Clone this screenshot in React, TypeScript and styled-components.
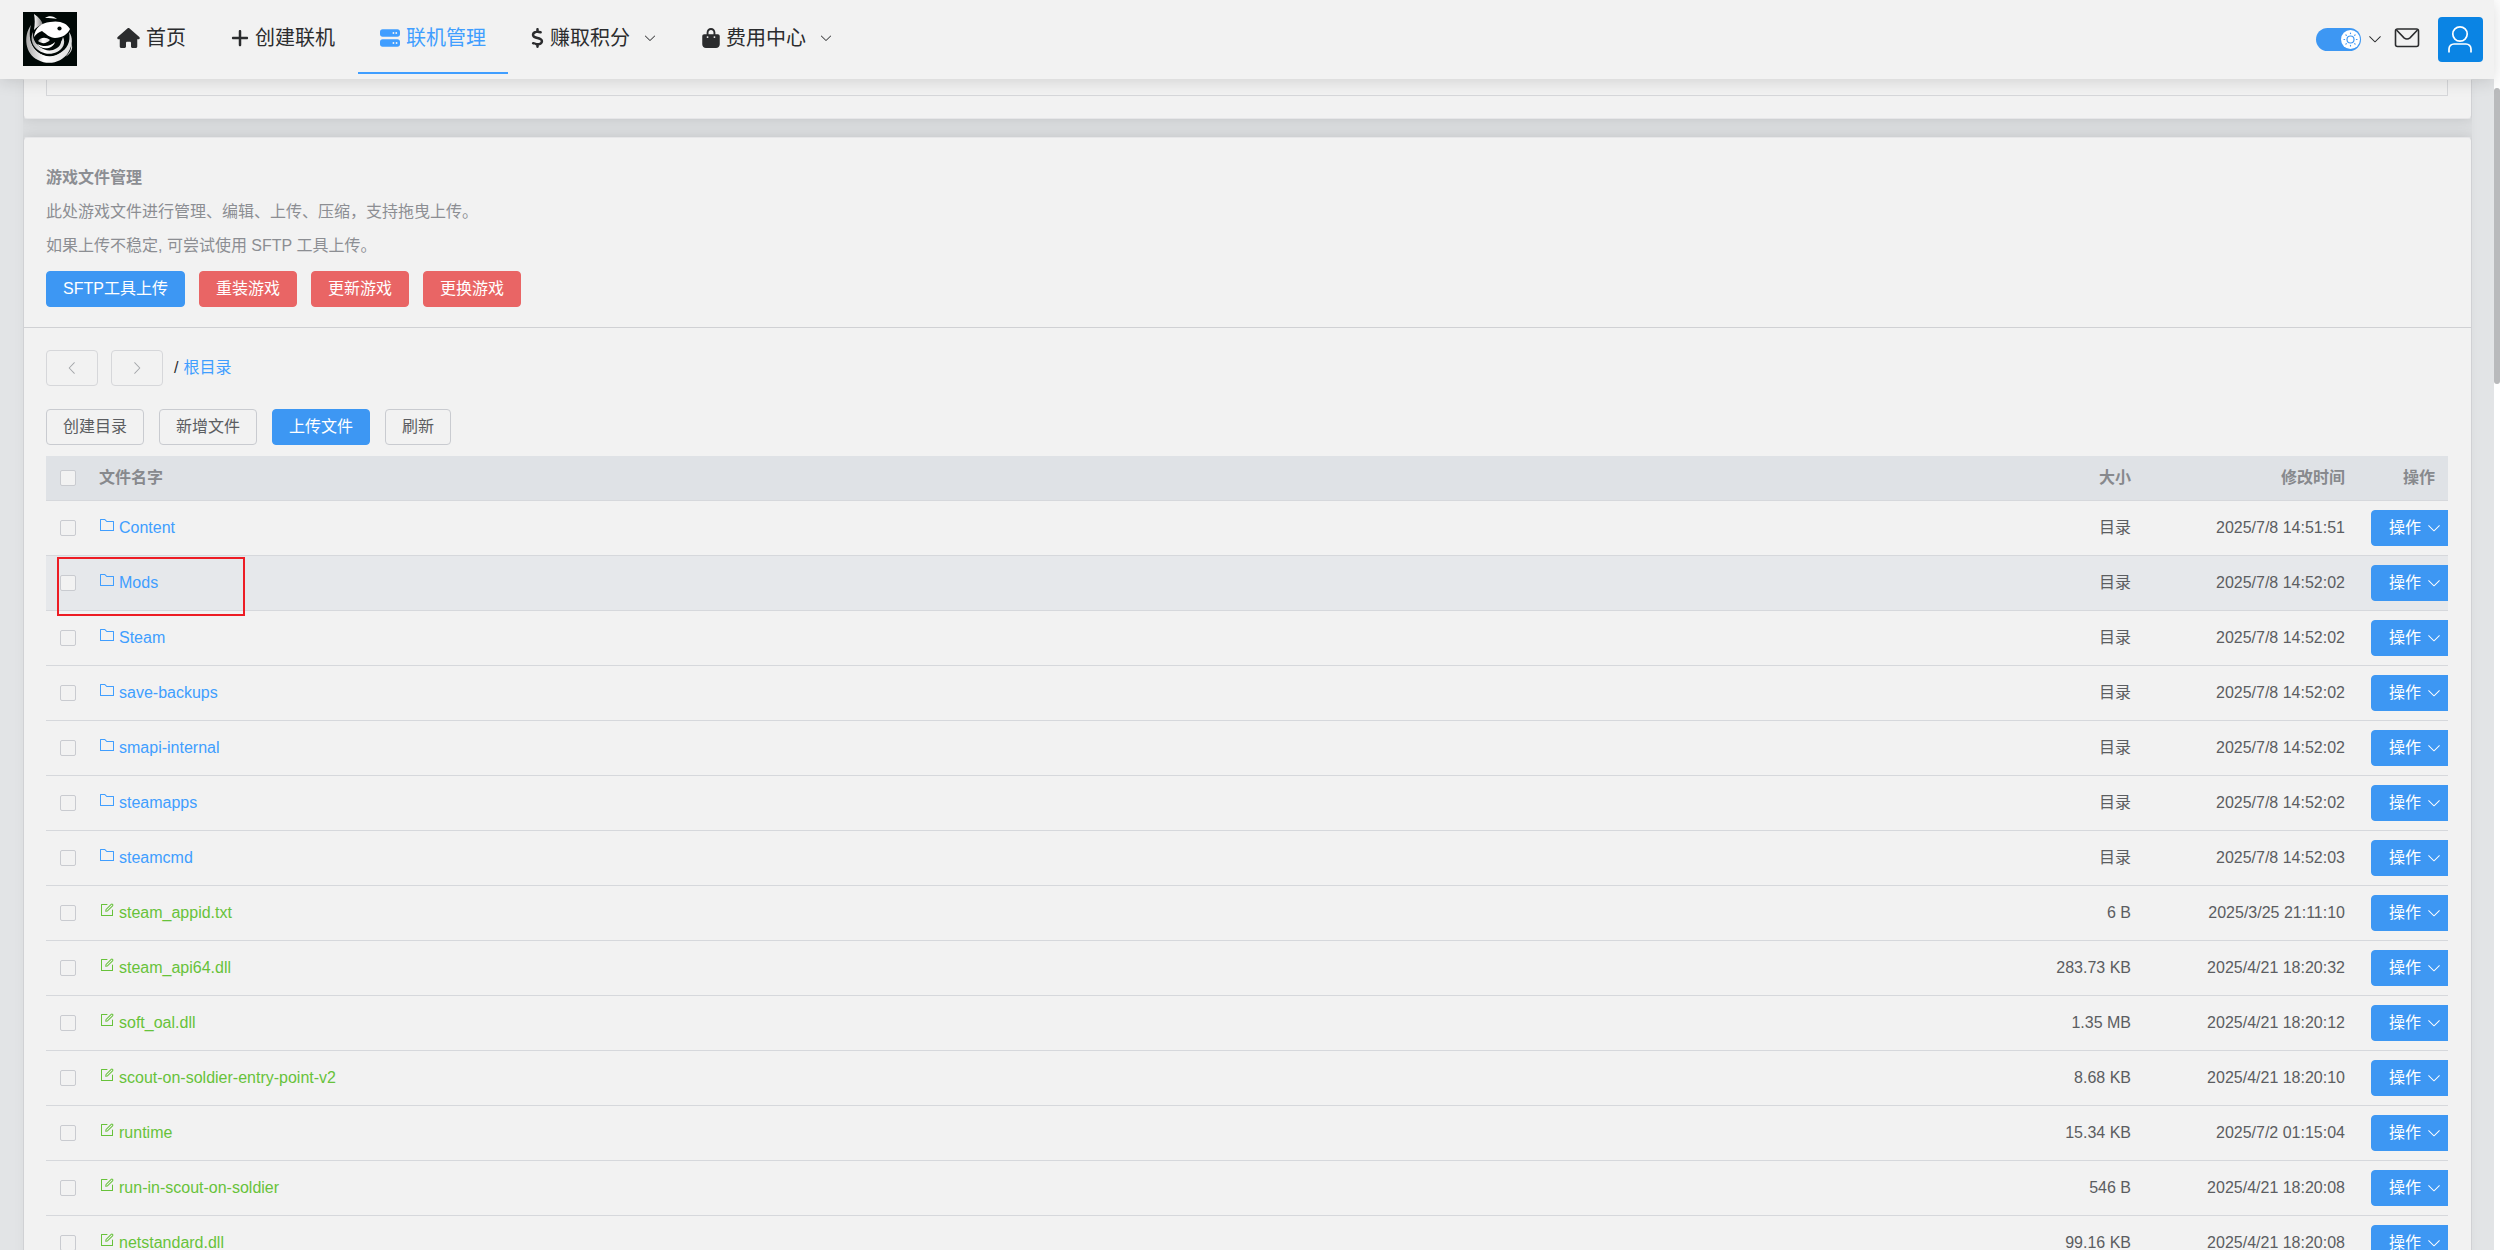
import React from 'react';
import styled, { createGlobalStyle } from 'styled-components';
import { FaHouse, FaPlus, FaServer, FaDollarSign, FaBagShopping } from 'react-icons/fa6';

const GlobalStyle = createGlobalStyle`
  *, *::before, *::after { box-sizing: border-box; }
  body {
    margin: 0;
    background: #ffffff;
    color: #5b5d61;
    font-family: "Liberation Sans", "Noto Sans CJK SC", sans-serif;
    font-size: 16px;
  }
  h2, p, ul { margin: 0; padding: 0; }
  a { color: #409eff; text-decoration: none; }
  button { font: inherit; cursor: pointer; }
  svg { display: block; flex: none; }
`;

const Page = styled.div`
  display: flex;
  height: 100vh;
`;

const Viewport = styled.div`
  flex: 1;
  min-width: 0;
  display: flex;
  flex-direction: column;
  background: #e2e4e6;
`;

const ScrollTrack = styled.div`
  width: 6px;
  padding-top: 88px;
  background: #ffffff;
`;

const ScrollThumb = styled.div`
  height: 296px;
  border-radius: 3px;
  background: #b9babc;
`;

/* ---------- top bar ---------- */

const TopBar = styled.header`
  position: relative;
  z-index: 2;
  flex: none;
  display: flex;
  align-items: center;
  height: 79px;
  padding: 0 11px 1px 23px;
  background: #f2f2f2;
  box-shadow: 0 2px 16px rgba(0, 0, 0, 0.14);
`;

const NavList = styled.ul`
  display: flex;
  flex: 1;
  gap: 1px;
  align-self: flex-start;
  margin-left: 18px;
  list-style: none;
`;

const NavLink = styled.a<{ $active?: boolean }>`
  display: flex;
  align-items: center;
  gap: 6px;
  height: 74px;
  padding: 0 22px;
  border-top: 4px solid transparent;
  border-bottom: 2px solid ${(p) => (p.$active ? '#409eff' : 'transparent')};
  color: ${(p) => (p.$active ? '#409eff' : '#2b2c2e')};
  font-size: 20px;
  line-height: 28px;
  white-space: nowrap;
`;

const NavIcon = styled.span<{ $width: number }>`
  display: flex;
  svg {
    width: ${(p) => p.$width}px;
    height: 20px;
  }
`;

const NavCaret = styled.span`
  margin-left: 7px;
`;

const Tools = styled.div`
  display: flex;
  align-items: center;
`;

const ThemeSwitch = styled.label`
  display: flex;
  position: relative;
  input {
    appearance: none;
    width: 45px;
    height: 23px;
    margin: 0;
    border-radius: 12px;
    background: #3d97f3;
  }
`;

const SwitchKnob = styled.span`
  position: absolute;
  top: 2px;
  right: 1px;
  width: 19px;
  height: 19px;
  border-radius: 50%;
  background: #ffffff;
  color: #3d97f3;
`;

const PlainButton = styled.button<{ $gap: number }>`
  display: flex;
  margin: 0 0 0 ${(p) => p.$gap}px;
  padding: 0;
  border: 0;
  background: none;
  color: #2b2c2e;
`;

const Avatar = styled(PlainButton)`
  border-radius: 4px;
  background: #0a84e4;
  color: #ffffff;
`;

/* ---------- cards ---------- */

const Scroller = styled.main`
  flex: 1;
  min-height: 0;
  overflow-y: auto;
  scrollbar-width: none;
  padding: 0 22px 0 23px;
`;

const Column = styled.div`
  display: flex;
  flex-direction: column;
  gap: 18px;
  overflow: hidden;
  background: #dcdee0;
  box-shadow: 0 0 12px rgba(0, 0, 0, 0.04);
`;

const Card = styled.section<{ $continued?: boolean }>`
  border: 1px solid #d0d1d4;
  border-top-color: ${(p) => (p.$continued ? 'transparent' : '#e6e6e8')};
  border-bottom-color: #e6e6e8;
  border-radius: ${(p) => (p.$continued ? '0 0 4px 4px' : '4px')};
  background: #f2f2f2;
  box-shadow: 0 0 14px rgba(0, 0, 0, 0.12);
`;

const PanelEnd = styled.div`
  height: 16px;
  margin: 0 23px 22px 22px;
  border: 1px solid #d6d7da;
  border-top: 0;
`;

const CardHead = styled.div`
  padding: 23px 23px 20px 22px;
  border-bottom: 1px solid #d0d1d4;
  color: #8c8e93;
  line-height: 34px;
`;

const Title = styled.h2`
  font-size: 16px;
  font-weight: bold;
`;

const CardBody = styled.div`
  padding: 22px 23px 22px 22px;
`;

const ButtonRow = styled.div<{ $gap: number; $top?: number }>`
  display: flex;
  align-items: center;
  gap: ${(p) => p.$gap}px;
  margin-top: ${(p) => p.$top || 0}px;
`;

const tones = {
  primary: { bg: '#3d97f3', edge: '#3d97f3', ink: '#ffffff' },
  danger: { bg: '#e96565', edge: '#e96565', ink: '#ffffff' },
  plain: { bg: '#f2f2f2', edge: '#c9cbd0', ink: '#5b5d61' },
  muted: { bg: '#f2f2f2', edge: '#d6d7da', ink: '#a4a6aa' },
};

const Button = styled.button<{ $tone: keyof typeof tones }>`
  display: flex;
  align-items: center;
  justify-content: center;
  gap: 5px;
  height: 36px;
  padding: 0 16px;
  border: 1px solid ${(p) => tones[p.$tone].edge};
  border-radius: 4px;
  background: ${(p) => tones[p.$tone].bg};
  color: ${(p) => tones[p.$tone].ink};
  line-height: 20px;
  white-space: nowrap;
`;

const StepButton = styled(Button)`
  width: 52px;
  cursor: not-allowed;
`;

const RowButton = styled(Button)`
  padding: 0 17px;
`;

const Crumbs = styled.nav`
  display: flex;
  gap: 5px;
  margin-left: -2px;
  color: #2b2c2e;
  line-height: 20px;
`;

/* ---------- file table ---------- */

const Table = styled.table`
  width: 100%;
  margin-top: 11px;
  table-layout: fixed;
  border-spacing: 0;
  line-height: 24px;
`;

const Col = styled.col<{ $width?: number }>`
  width: ${(p) => (p.$width ? p.$width + 'px' : 'auto')};
`;

const HeadCell = styled.th<{ $right?: boolean }>`
  height: 45px;
  padding: 0 13px;
  border-bottom: 1px solid #d6d8dc;
  background: #dfe2e6;
  color: #87898d;
  font-weight: bold;
  text-align: ${(p) => (p.$right ? 'right' : 'left')};
`;

const Row = styled.tr<{ $hovered?: boolean }>`
  background: ${(p) => (p.$hovered ? '#e6e8eb' : 'transparent')};
`;

const Cell = styled.td<{ $right?: boolean }>`
  position: relative;
  height: 55px;
  padding: 0 13px;
  border-bottom: 1px solid #d6d8dc;
  text-align: ${(p) => (p.$right ? 'right' : 'left')};
  white-space: nowrap;
`;

const ActionCell = styled(Cell)`
  padding-right: 0;
  overflow: hidden;
`;

const Check = styled.input`
  appearance: none;
  display: block;
  width: 16px;
  height: 16px;
  margin: 0 0 0 1px;
  border: 1px solid #c9cbd0;
  border-radius: 2px;
  background: #f2f2f2;
`;

const FileLink = styled.a<{ $file: boolean }>`
  color: ${(p) => (p.$file ? '#67c23a' : '#409eff')};
  svg {
    display: inline;
    margin-right: 4px;
    vertical-align: baseline;
  }
`;

const Marker = styled.span`
  position: absolute;
  z-index: 1;
  top: 1px;
  left: 11px;
  width: 188px;
  height: 59px;
  border: 2px solid #ed1c24;
  pointer-events: none;
`;

/* ---------- drawings ---------- */

const Glyph = ({ d, size = 16, turn = 0 }: { d: string; size?: number; turn?: number }) => (
  <svg width={size} height={size} viewBox="0 0 1024 1024" fill="currentColor" aria-hidden="true">
    <path d={d} transform={`rotate(${turn} 512 512)`} />
  </svg>
);

const ARROW =
  'M831.872 340.864 512 652.672 192.128 340.864a30.592 30.592 0 0 0-42.752 0 29.12 29.12 0 0 0 0 41.6L489.664 714.24a32 32 0 0 0 44.672 0l340.288-331.712a29.12 29.12 0 0 0 0-41.728 30.592 30.592 0 0 0-42.752 0z';
const FOLDER =
  'M128 192v640h768V320H485.76L357.504 192H128zm-32-64h287.872l128.384 128H928a32 32 0 0 1 32 32v576a32 32 0 0 1-32 32H96a32 32 0 0 1-32-32V160a32 32 0 0 1 32-32z';
const EDIT =
  'M832 512a32 32 0 1 1 64 0v352a32 32 0 0 1-32 32H160a32 32 0 0 1-32-32V160a32 32 0 0 1 32-32h352a32 32 0 0 1 0 64H192v640h640V512zM469.952 554.24l52.8-7.552L847.104 222.4a32 32 0 1 0-45.248-45.248L477.44 501.44l-7.488 52.8zm422.4-422.4a96 96 0 0 1 0 135.808l-331.84 331.84a32 32 0 0 1-18.112 9.088L436.8 623.68a32 32 0 0 1-36.224-36.224l15.104-105.6a32 32 0 0 1 9.024-18.112l331.904-331.84a96 96 0 0 1 135.744 0z';

const Logo = () => (
  <svg width="54" height="54" viewBox="0 0 54 54" role="img" aria-label="logo">
    <defs>
      <linearGradient id="fin" x1="0" x2="1">
        <stop offset="0" stopColor="#fff" />
        <stop offset="1" stopColor="#777" />
      </linearGradient>
      <linearGradient id="wave" x1="0" x2="1">
        <stop offset="0" stopColor="#aaa" />
        <stop offset="0.4" stopColor="#fff" />
        <stop offset="1" stopColor="#ddd" />
      </linearGradient>
    </defs>
    <rect width="54" height="54" fill="#000806" />
    <path d="M8 13C0 24 2 42 15 48c11 6 24 2 30-7 5-8 5-16 1-21 2 10-2 17-9 21-9 5-20 3-26-5C6 29 6 20 8 13z" fill="url(#wave)" />
    <path d="M7 26c3 8 10 13 18 13 8 1 15-4 17-12 2 7-3 13-9 16-10 4-23-2-26-17z" fill="#000806" />
    <path d="M10 20c-1 8 4 15 12 17 8 1 16-3 18-12 3 6 0 12-6 15-8 4-18 1-23-6-3-5-3-10-1-14z" fill="url(#wave)" />
    <path d="M12 27c2 5 8 8 13 8 6 0 11-4 12-9 3 5-1 10-7 12-8 2-16-3-18-11z" fill="#000806" />
    <path d="M14 32c6 3 13 3 18-2-2 7-13 9-18 2z" fill="#fff" />
    <path d="M42 45c5-4 7-9 6-14 3 5 0 11-6 14z" fill="#ddd" />
    <path d="M11 2c5 3 8 7 9 11-4 0-6 2-9 5 1-6 1-11 0-16z" fill="url(#fin)" />
    <path d="M22 6c4-3 9-2 12 1-4-1-7-1-12-1z" fill="#fff" />
    <path d="M11 25c1-9 7-14 16-15 9-2 17 1 20 7-2 5-8 9-15 9-5 0-9-4-13-7-3 1-6 3-8 6z" fill="#fff" />
    <path d="M15 29c3-4 8-4 12-1-4 4-8 4-12 1z" fill="url(#wave)" />
    <circle cx="36.500" cy="16.500" r="2.100" fill="#000806" />
  </svg>
);

const Sun = () => (
  <svg width="19" height="19" viewBox="0 0 19 19" fill="none" stroke="currentColor" strokeLinecap="round" aria-hidden="true">
    <circle cx="9.500" cy="9.500" r="3.500" strokeWidth="1.200" />
    <path
      d="M9.500 3v.6M9.500 15.400v.6M3 9.500h.6M15.400 9.500h.6M4.900 4.900l.4.4M13.700 13.700l.4.4M4.900 14.100l.4-.4M13.700 5.300l.4-.4"
      strokeWidth="1.200"
    />
  </svg>
);

const Mail = () => (
  <svg width="26" height="22" viewBox="0 0 26 22" fill="none" stroke="currentColor" strokeWidth="1.600" aria-hidden="true">
    <rect x="1.500" y="1" width="23" height="17.500" rx="2" />
    <path d="M2.500 2 10 9.800q3 2.400 6 0L23.500 2" />
  </svg>
);

const Person = () => (
  <svg width="45" height="45" viewBox="0 0 45 45" fill="none" stroke="currentColor" strokeWidth="1.700" aria-hidden="true">
    <circle cx="22" cy="17" r="7.200" />
    <path d="M11 35.500V32a5 5 0 0 1 5-5h12a5 5 0 0 1 5 5v3.500" />
  </svg>
);

/* ---------- data ---------- */

const navItems = [
  { label: '首页', icon: FaHouse, width: 23 },
  { label: '创建联机', icon: FaPlus, width: 18 },
  { label: '联机管理', icon: FaServer, width: 20, active: true },
  { label: '赚取积分', icon: FaDollarSign, width: 13, menu: true },
  { label: '费用中心', icon: FaBagShopping, width: 18, menu: true },
];

type Entry = { name: string; size?: string; time: string; marked?: boolean };

const entries: Entry[] = [
  { name: 'Content', time: '2025/7/8 14:51:51' },
  { name: 'Mods', time: '2025/7/8 14:52:02', marked: true },
  { name: 'Steam', time: '2025/7/8 14:52:02' },
  { name: 'save-backups', time: '2025/7/8 14:52:02' },
  { name: 'smapi-internal', time: '2025/7/8 14:52:02' },
  { name: 'steamapps', time: '2025/7/8 14:52:02' },
  { name: 'steamcmd', time: '2025/7/8 14:52:03' },
  { name: 'steam_appid.txt', size: '6 B', time: '2025/3/25 21:11:10' },
  { name: 'steam_api64.dll', size: '283.73 KB', time: '2025/4/21 18:20:32' },
  { name: 'soft_oal.dll', size: '1.35 MB', time: '2025/4/21 18:20:12' },
  { name: 'scout-on-soldier-entry-point-v2', size: '8.68 KB', time: '2025/4/21 18:20:10' },
  { name: 'runtime', size: '15.34 KB', time: '2025/7/2 01:15:04' },
  { name: 'run-in-scout-on-soldier', size: '546 B', time: '2025/4/21 18:20:08' },
  { name: 'netstandard.dll', size: '99.16 KB', time: '2025/4/21 18:20:08' },
];

const FileRow = ({ entry }: { entry: Entry }) => (
  <Row $hovered={entry.marked}>
    <Cell>
      <Check type="checkbox" aria-label={entry.name} />
      {entry.marked && <Marker />}
    </Cell>
    <Cell>
      <FileLink href="#" $file={!!entry.size}>
        <Glyph d={entry.size ? EDIT : FOLDER} />
        {entry.name}
      </FileLink>
    </Cell>
    <Cell $right>{entry.size || '目录'}</Cell>
    <Cell $right>{entry.time}</Cell>
    <ActionCell>
      <RowButton $tone="primary" type="button">
        操作
        <Glyph d={ARROW} />
      </RowButton>
    </ActionCell>
  </Row>
);

export default function App() {
  return (
    <Page>
      <GlobalStyle />
      <Viewport>
        <TopBar>
          <Logo />
          <NavList>
            {navItems.map(({ label, icon: Icon, width, active, menu }) => (
              <li key={label}>
                <NavLink href="#" $active={active}>
                  <NavIcon $width={width}>
                    <Icon />
                  </NavIcon>
                  {label}
                  {menu && (
                    <NavCaret>
                      <Glyph d={ARROW} size={14} />
                    </NavCaret>
                  )}
                </NavLink>
              </li>
            ))}
          </NavList>
          <Tools>
            <ThemeSwitch>
              <input type="checkbox" role="switch" defaultChecked aria-label="主题" />
              <SwitchKnob>
                <Sun />
              </SwitchKnob>
            </ThemeSwitch>
            <PlainButton $gap={6} type="button" aria-label="主题菜单">
              <Glyph d={ARROW} />
            </PlainButton>
            <PlainButton $gap={11} type="button" aria-label="消息">
              <Mail />
            </PlainButton>
            <Avatar $gap={18} type="button" aria-label="用户">
              <Person />
            </Avatar>
          </Tools>
        </TopBar>
        <Scroller>
          <Column>
            <Card $continued>
              <PanelEnd />
            </Card>
            <Card>
              <CardHead>
                <Title>游戏文件管理</Title>
                <p>此处游戏文件进行管理、编辑、上传、压缩，支持拖曳上传。</p>
                <p>如果上传不稳定, 可尝试使用 SFTP 工具上传。</p>
                <ButtonRow $gap={14} $top={8}>
                  <Button $tone="primary" type="button">SFTP工具上传</Button>
                  <Button $tone="danger" type="button">重装游戏</Button>
                  <Button $tone="danger" type="button">更新游戏</Button>
                  <Button $tone="danger" type="button">更换游戏</Button>
                </ButtonRow>
              </CardHead>
              <CardBody>
                <ButtonRow $gap={13}>
                  <StepButton $tone="muted" type="button" aria-label="后退">
                    <Glyph d={ARROW} turn={90} />
                  </StepButton>
                  <StepButton $tone="muted" type="button" aria-label="前进">
                    <Glyph d={ARROW} turn={-90} />
                  </StepButton>
                  <Crumbs>
                    <span>/</span>
                    <a href="#">根目录</a>
                  </Crumbs>
                </ButtonRow>
                <ButtonRow $gap={15} $top={23}>
                  <Button $tone="plain" type="button">创建目录</Button>
                  <Button $tone="plain" type="button">新增文件</Button>
                  <Button $tone="primary" type="button">上传文件</Button>
                  <Button $tone="plain" type="button">刷新</Button>
                </ButtonRow>
                <Table>
                  <colgroup>
                    <Col $width={40} />
                    <Col />
                    <Col $width={202} />
                    <Col $width={214} />
                    <Col $width={90} />
                  </colgroup>
                  <thead>
                    <tr>
                      <HeadCell>
                        <Check type="checkbox" aria-label="全选" />
                      </HeadCell>
                      <HeadCell>文件名字</HeadCell>
                      <HeadCell $right>大小</HeadCell>
                      <HeadCell $right>修改时间</HeadCell>
                      <HeadCell $right>操作</HeadCell>
                    </tr>
                  </thead>
                  <tbody>
                    {entries.map((entry) => (
                      <FileRow key={entry.name} entry={entry} />
                    ))}
                  </tbody>
                </Table>
              </CardBody>
            </Card>
          </Column>
        </Scroller>
      </Viewport>
      <ScrollTrack>
        <ScrollThumb />
      </ScrollTrack>
    </Page>
  );
}
